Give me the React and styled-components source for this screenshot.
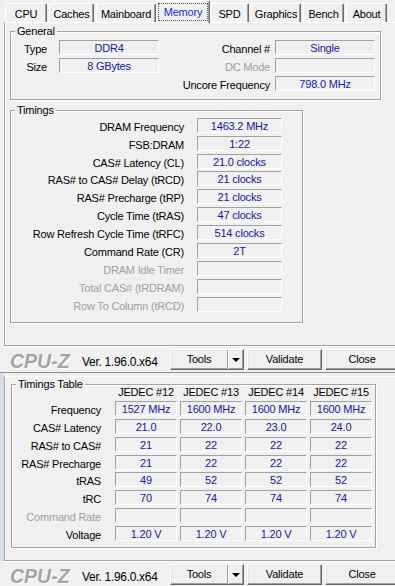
import React from "react";
import styled, { createGlobalStyle } from "styled-components";

const GlobalStyle = createGlobalStyle`
  html, body {
    margin: 0;
    padding: 0;
    background: #f0f0f0;
  }
  body {
    width: 395px;
    height: 586px;
    overflow: hidden;
    font-family: "Liberation Sans", Arial, sans-serif;
    font-size: 11px;
    letter-spacing: -0.2px;
    color: #000;
  }
`;

const Page = styled.div`
  width: 395px;
  height: 586px;
  overflow: hidden;
  display: flex;
  flex-direction: column;
`;

const TabRow = styled.div`
  display: flex;
  align-items: flex-end;
  height: 22px;
  padding-left: 5px;
  position: relative;
  z-index: 1;
`;

const Tab = styled.div`
  box-sizing: border-box;
  flex: none;
  width: ${(p) => p.$w}px;
  height: ${(p) => (p.$active ? 23 : 19)}px;
  margin: ${(p) => (p.$active ? "0 0 -1px -2px" : "0 2px 0 0")};
  background: #f0f0f0;
  border-top: 1px solid #fff;
  border-left: 1px solid #fff;
  border-right: 1px solid #696969;
  box-shadow: inset -1px 0 #a0a0a0;
  border-radius: 2px 2px 0 0;
  display: flex;
  align-items: center;
  justify-content: center;
  padding-top: ${(p) => (p.$active ? 0 : 1)}px;
  color: ${(p) => (p.$active ? "#2626e8" : "#000")};
`;

const Focus = styled.span`
  flex: 1;
  align-self: stretch;
  margin: 2px 1px 2px 1px;
  border: 1px dotted #555;
  display: flex;
  align-items: center;
  justify-content: center;
`;

const Panel = styled.div`
  box-sizing: border-box;
  flex: none;
  width: 400px;
  height: ${(p) => p.$h}px;
  margin-left: 4px;
  border-top: 1px solid #fff;
  border-left: 1px solid #a0a0a0;
  border-bottom: 1px solid #a0a0a0;
  box-shadow: inset 1px 0 #fff, 0 1px #fff;
  padding-top: ${(p) => p.$pt}px;
  display: flex;
  flex-direction: column;
  align-items: flex-start;
`;

const Group = styled.fieldset`
  box-sizing: border-box;
  width: ${(p) => p.$w}px;
  margin: ${(p) => p.$mt}px 0 0 ${(p) => p.$ml}px;
  padding: 0;
  min-width: 0;
  border: 1px solid #a0a0a0;
  box-shadow: inset 1px 1px #fff, 1px 1px #fff;
`;

const Legend = styled.legend`
  margin-left: 4px;
  padding: 0 2px;
  line-height: ${(p) => p.$lh || 13}px;
  background: #f0f0f0;
`;

/* CPU-Z rows sit on an 11 dialog-unit pitch: 17.875px */
const GeneralGrid = styled.div`
  display: grid;
  grid-template-columns: 48px 100px 1fr 100px;
  grid-auto-rows: 15px;
  row-gap: 2.875px;
  padding: 2px 5px 8px 0;
`;

const TimingsGrid = styled.div`
  display: grid;
  grid-template-columns: 1fr 85px;
  grid-auto-rows: 15px;
  row-gap: 2.875px;
  padding: 1px 20px 10px 0;
`;

const TableGrid = styled.div`
  display: grid;
  grid-template-columns: 100px repeat(4, 62px);
  grid-template-rows: 12px;
  grid-auto-rows: 15px;
  column-gap: 3px;
  row-gap: 2.875px;
  margin-top: -4px;
  padding: 0 5px 6px 0;
`;

const Label = styled.div`
  text-align: right;
  line-height: 14px;
  padding-top: 2px;
  white-space: nowrap;
  padding-right: ${(p) => p.$pr}px;
  color: ${(p) => (p.$dim ? "#a0a0a0" : "#000")};
  grid-column: ${(p) => p.$col || "auto"};
`;

const Head = styled.div`
  text-align: center;
  line-height: 12px;
  white-space: nowrap;
`;

const Field = styled.div`
  box-sizing: border-box;
  height: 15px;
  border-top: 1px solid #a0a0a0;
  border-left: 1px solid #a0a0a0;
  border-right: 1px solid #fff;
  border-bottom: 1px solid #fff;
  color: #18189a;
  text-align: center;
  line-height: 14px;
  white-space: nowrap;
  overflow: hidden;
  grid-column: ${(p) => p.$col || "auto"};
`;

const Bar = styled.div`
  flex: none;
  display: flex;
  align-items: flex-start;
  height: 26px;
  padding: 3px 0 0 10px;
  box-sizing: border-box;
`;

const Logo = styled.div`
  flex: none;
  width: 72px;
  margin-top: 4px;
  font-size: 19.5px;
  line-height: 16px;
  font-weight: bold;
  font-style: italic;
  letter-spacing: 0;
  color: #a4a4a4;
  text-shadow: 1px 1px 0 #fff;
`;

const Version = styled.div`
  flex: none;
  width: 88px;
  margin-top: 6px;
  font-size: 12px;
  line-height: 14px;
  letter-spacing: -0.3px;
`;

const Button = styled.div`
  box-sizing: border-box;
  flex: none;
  width: ${(p) => p.$w}px;
  height: 21px;
  margin-right: ${(p) => p.$mr || 0}px;
  background: #f0f0f0;
  border-top: 1px solid #fff;
  border-left: 1px solid #fff;
  border-right: 1px solid #696969;
  border-bottom: 1px solid #696969;
  box-shadow: inset -1px -1px #a0a0a0, inset 1px 1px #e3e3e3;
  display: flex;
  align-items: center;
`;

const ButtonText = styled.span`
  flex: 1;
  text-align: center;
  line-height: 19px;
`;

const SplitArrow = styled.span`
  flex: none;
  width: 16px;
  height: 19px;
  box-sizing: border-box;
  border-left: 1px solid #a0a0a0;
  box-shadow: inset 1px 0 #fff;
  display: flex;
  align-items: center;
  justify-content: center;
  &::after {
    content: "";
    border-left: 4px solid transparent;
    border-right: 4px solid transparent;
    border-top: 4px solid #000;
  }
`;

const Seam = styled.div`
  flex: none;
  height: 3px;
  border-top: 1px solid #8e8e8e;
  background: linear-gradient(#d2d2d2, #eaeaea);
`;

const FrameEdge = styled.div`
  flex: none;
  display: flex;
  background: linear-gradient(90deg, #d6dfe9 4px, #f0f0f0 4px);
  margin-top: -3px;
  padding-top: 3px;
`;

const tabs = [
  { name: "CPU", w: 42 },
  { name: "Caches", w: 45 },
  { name: "Mainboard", w: 60 },
  { name: "Memory", w: 54, active: true },
  { name: "SPD", w: 39 },
  { name: "Graphics", w: 50 },
  { name: "Bench", w: 41 },
  { name: "About", w: 41 },
];

const timings = [
  ["DRAM Frequency", "1463.2 MHz"],
  ["FSB:DRAM", "1:22"],
  ["CAS# Latency (CL)", "21.0 clocks"],
  ["RAS# to CAS# Delay (tRCD)", "21 clocks"],
  ["RAS# Precharge (tRP)", "21 clocks"],
  ["Cycle Time (tRAS)", "47 clocks"],
  ["Row Refresh Cycle Time (tRFC)", "514 clocks"],
  ["Command Rate (CR)", "2T"],
  ["DRAM Idle Timer", "", true],
  ["Total CAS# (tRDRAM)", "", true],
  ["Row To Column (tRCD)", "", true],
];

const jedec = ["JEDEC #12", "JEDEC #13", "JEDEC #14", "JEDEC #15"];

const tableRows = [
  ["Frequency", ["1527 MHz", "1600 MHz", "1600 MHz", "1600 MHz"]],
  ["CAS# Latency", ["21.0", "22.0", "23.0", "24.0"]],
  ["RAS# to CAS#", ["21", "22", "22", "22"]],
  ["RAS# Precharge", ["21", "22", "22", "22"]],
  ["tRAS", ["49", "52", "52", "52"]],
  ["tRC", ["70", "74", "74", "74"]],
  ["Command Rate", ["", "", "", ""], true],
  ["Voltage", ["1.20 V", "1.20 V", "1.20 V", "1.20 V"]],
];

function BottomBar() {
  return (
    <Bar>
      <Logo>CPU-Z</Logo>
      <Version>Ver. 1.96.0.x64</Version>
      <Button $w={74} $mr={3}>
        <ButtonText>Tools</ButtonText>
        <SplitArrow />
      </Button>
      <Button $w={75} $mr={3}>
        <ButtonText>Validate</ButtonText>
      </Button>
      <Button $w={74}>
        <ButtonText>Close</ButtonText>
      </Button>
    </Bar>
  );
}

export default function App() {
  return (
    <Page>
      <GlobalStyle />
      <TabRow>
        {tabs.map((t) => (
          <Tab key={t.name} $w={t.w} $active={t.active}>
            {t.active ? <Focus>{t.name}</Focus> : t.name}
          </Tab>
        ))}
      </TabRow>
      <Panel $h={324} $pt={2}>
        <Group $w={371} $mt={0} $ml={5}>
          <Legend>General</Legend>
          <GeneralGrid>
            <Label $pr={12}>Type</Label>
            <Field>DDR4</Field>
            <Label $pr={5}>Channel #</Label>
            <Field>Single</Field>
            <Label $pr={12}>Size</Label>
            <Field>8 GBytes</Field>
            <Label $pr={5} $dim>
              DC Mode
            </Label>
            <Field />
            <Label $pr={5} $col="3">
              Uncore Frequency
            </Label>
            <Field>798.0 MHz</Field>
          </GeneralGrid>
        </Group>
        <Group $w={293} $mt={4} $ml={5}>
          <Legend>Timings</Legend>
          <TimingsGrid>
            {timings.map(([label, value, dim]) => (
              <React.Fragment key={label}>
                <Label $pr={13} $dim={dim}>
                  {label}
                </Label>
                <Field>{value}</Field>
              </React.Fragment>
            ))}
          </TimingsGrid>
        </Group>
      </Panel>
      <BottomBar />
      <Seam />
      <FrameEdge>
        <Panel $h={185} $pt={0}>
          <Group $w={365} $mt={1} $ml={6}>
            <Legend $lh={12}>Timings Table</Legend>
            <TableGrid>
              <div />
              {jedec.map((j) => (
                <Head key={j}>{j}</Head>
              ))}
              {tableRows.map(([label, values, dim]) => (
                <React.Fragment key={label}>
                  <Label $pr={11} $dim={dim}>
                    {label}
                  </Label>
                  {values.map((v, i) => (
                    <Field key={i}>{v}</Field>
                  ))}
                </React.Fragment>
              ))}
            </TableGrid>
          </Group>
        </Panel>
      </FrameEdge>
      <BottomBar />
    </Page>
  );
}
